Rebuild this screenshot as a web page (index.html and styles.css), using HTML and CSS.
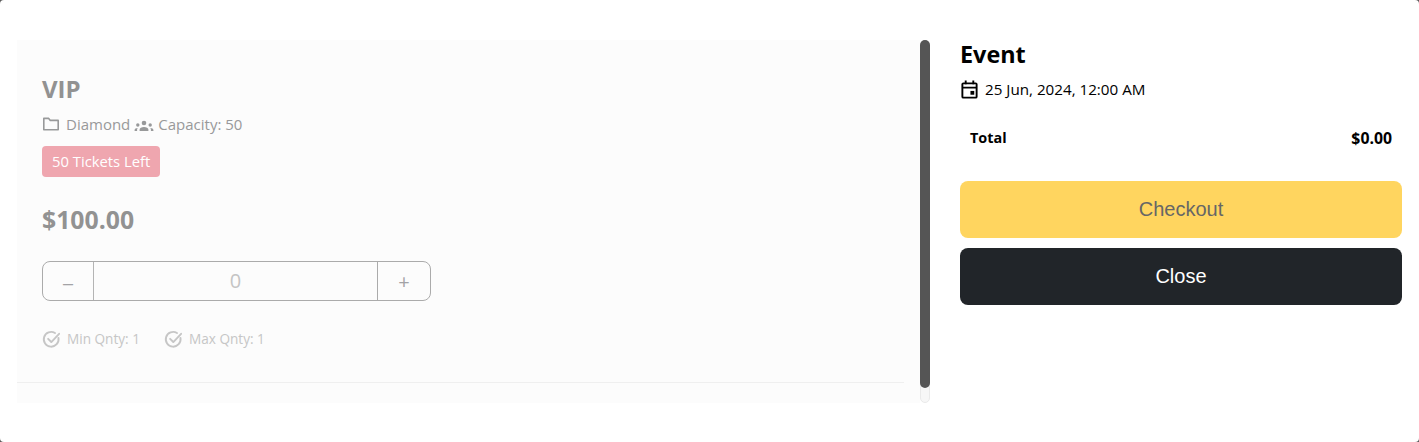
FILE: index.html
```html
<!DOCTYPE html>
<html lang="en">
<head>
    <meta charset="UTF-8">
    <meta name="viewport" content="width=device-width, initial-scale=1.0">
    <title>Event Tickets</title>
    <link rel="stylesheet" href="styles.css">
</head>
<body>
    <div class="modal">
        <div class="ticket-pane">
            <div class="ticket-list">
                <div class="ticket">
                    <h3 class="ticket-name">VIP</h3>
                    <div class="ticket-meta">
                        <svg class="icon-folder" viewBox="0 0 18 16" fill="none" stroke="currentColor" stroke-width="1.6"><path d="M1.8 2.4h4.9l1.6 2h7.9v9.4H1.8z" stroke-linejoin="round"/></svg>
                        <span>Diamond</span>
                        <svg class="icon-group" viewBox="0 0 20 14" fill="currentColor"><circle cx="10" cy="5" r="2.3"/><circle cx="3.8" cy="7" r="1.7"/><circle cx="16.2" cy="7" r="1.7"/><path d="M5.6 13v-1.4c0-1.7 2-2.7 4.4-2.7s4.4 1 4.4 2.7V13zM.6 13v-1c0-1.1 1.2-1.9 3.2-2-.5.5-.7 1-.7 1.6V13zM19.4 13v-1c0-1.1-1.2-1.9-3.2-2 .5.5.7 1 .7 1.6V13z"/></svg>
                        <span>Capacity: 50</span>
                    </div>
                    <span class="badge">50 Tickets Left</span>
                    <div class="ticket-price">$100.00</div>
                    <div class="qty">
                        <button class="qty-btn qty-minus">&ndash;</button>
                        <div class="qty-value">0</div>
                        <button class="qty-btn qty-plus">+</button>
                    </div>
                    <div class="limits">
                        <div class="limit">
                            <svg class="icon-check" viewBox="0 0 18 18" fill="none" stroke="currentColor" stroke-width="1.8" stroke-linecap="round" stroke-linejoin="round"><path d="M15.6 7.6a7 7 0 1 1-3.3-4.8"/><path d="M5.8 8.4l3 3 7.4-7.8"/></svg>
                            <span>Min Qnty: 1</span>
                        </div>
                        <div class="limit">
                            <svg class="icon-check" viewBox="0 0 18 18" fill="none" stroke="currentColor" stroke-width="1.8" stroke-linecap="round" stroke-linejoin="round"><path d="M15.6 7.6a7 7 0 1 1-3.3-4.8"/><path d="M5.8 8.4l3 3 7.4-7.8"/></svg>
                            <span>Max Qnty: 1</span>
                        </div>
                    </div>
                </div>
            </div>
            <div class="scrollbar"><div class="scrollbar-thumb"></div></div>
        </div>
        <div class="summary">
            <h2 class="event-title">Event</h2>
            <div class="event-date">
                <svg class="icon-calendar" viewBox="0 0 18 20" fill="none" stroke="currentColor" stroke-width="2"><rect x="1.5" y="3.5" width="15" height="15" rx="1"/><path d="M1.5 8h15M5 .5v4M13 .5v4"/><rect x="10" y="11.5" width="4" height="4" fill="currentColor" stroke="none"/></svg>
                <span>25 Jun, 2024, 12:00 AM</span>
            </div>
            <div class="total-row">
                <span>Total</span>
                <span class="total-value">$0.00</span>
            </div>
            <button class="btn btn-checkout">Checkout</button>
            <button class="btn btn-close">Close</button>
        </div>
    </div>
</body>
</html>
```
FILE: styles.css
```css
html, body {
    height: 100%;
}
body {
    margin: 0;
    background-color: #5a5a5a;
    font-family: "Open Sans", "Noto Sans", sans-serif;
    overflow: hidden;
}
h2, h3 {
    margin: 0;
}
.modal {
    height: 442px;
    box-sizing: border-box;
    padding: 40px 17px 0 17px;
    display: flex;
    background-color: #FFFFFF;
    border-radius: 4px;
}
.ticket-pane {
    width: 913px;
    height: 363px;
    display: flex;
}
.ticket-list {
    width: 903px;
    height: 363px;
    background-color: #FCFCFC;
}
.ticket {
    width: 887px;
    height: 343px;
    box-sizing: border-box;
    padding: 32px 25px 0 25px;
    border-bottom: 1px solid #EFEFEF;
}
.ticket-name {
    font-size: 24px;
    line-height: 33px;
    font-weight: 700;
    color: #929292;
}
.ticket-meta {
    margin-top: 8px;
    height: 22px;
    display: flex;
    align-items: center;
    font-size: 15px;
    color: #98999A;
}
.icon-folder {
    width: 18px;
    height: 16px;
    margin-right: 6px;
}
.icon-group {
    width: 20px;
    height: 14px;
    margin: 2px 4px 0 4px;
}
.badge {
    display: inline-block;
    margin-top: 11px;
    padding: 0 10px;
    height: 31px;
    line-height: 31px;
    border-radius: 4px;
    background-color: #EFA6AF;
    color: #FFFFFF;
    font-size: 14.8px;
}
.ticket-price {
    margin-top: 11px;
    font-size: 24.8px;
    line-height: 63px;
    font-weight: 700;
    color: #929292;
}
.qty {
    margin-top: 10px;
    width: 389px;
    height: 40px;
    box-sizing: border-box;
    display: flex;
    border: 1px solid #ABABAB;
    border-radius: 8px;
}
.qty-btn {
    border: none;
    padding: 0;
    background: none;
    color: #A3A3A6;
    font-family: inherit;
}
.qty-minus {
    width: 51px;
    font-size: 24px;
    font-weight: 300;
    border-right: 1px solid #B4B4B4;
}
.qty-plus {
    width: 53px;
    font-size: 20px;
    border-left: 1px solid #ABABAB;
}
.qty-value {
    flex: 1;
    text-align: center;
    line-height: 38px;
    font-size: 20px;
    color: #C4C4C4;
}
.limits {
    margin-top: 28px;
    display: flex;
    gap: 24px;
}
.limit {
    display: flex;
    align-items: center;
    gap: 6px;
    font-size: 13.6px;
    line-height: 20px;
    color: #C6C6C6;
}
.icon-check {
    width: 19px;
    height: 19px;
}
.scrollbar {
    width: 10px;
    height: 363px;
    box-sizing: border-box;
    border: 1px solid #EAEAEA;
    border-radius: 5px;
    background-color: #F7F7F7;
    position: relative;
}
.scrollbar-thumb {
    position: absolute;
    top: -1px;
    left: -1px;
    width: 10px;
    height: 348px;
    border-radius: 5px;
    background-color: #555555;
}
.summary {
    width: 442px;
    margin-left: 30px;
}
.event-title {
    margin-top: -1px;
    font-size: 23.4px;
    line-height: 30px;
    font-weight: 700;
    color: #000000;
}
.event-date {
    margin-top: 8px;
    display: flex;
    align-items: center;
    gap: 6px;
    font-size: 15.2px;
    line-height: 24px;
    color: #000000;
}
.icon-calendar {
    width: 19px;
    height: 19px;
}
.total-row {
    margin-top: 27px;
    padding: 0 10px;
    display: flex;
    justify-content: space-between;
    font-size: 14.4px;
    line-height: 20px;
    font-weight: 700;
    color: #000000;
}
.total-value {
    font-size: 15.8px;
}
.btn {
    display: block;
    width: 100%;
    height: 57px;
    border: none;
    border-radius: 8px;
    font-family: "Liberation Sans", Arial, sans-serif;
    font-size: 20px;
}
.btn-checkout {
    margin-top: 33px;
    background-color: #FFD55F;
    color: #666666;
}
.btn-close {
    margin-top: 10px;
    background-color: #212529;
    color: #FFFFFF;
}
```
